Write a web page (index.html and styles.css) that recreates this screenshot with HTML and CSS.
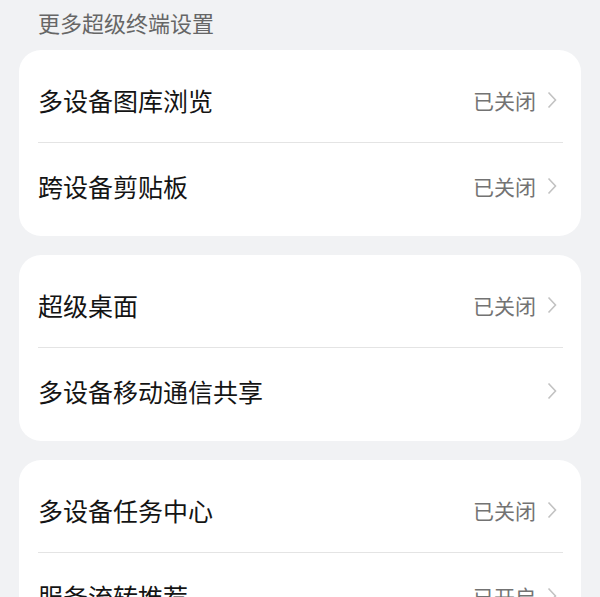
FILE: index.html
```html
<!DOCTYPE html>
<html lang="zh-CN">
<head>
    <meta charset="UTF-8">
    <meta name="viewport" content="width=device-width, initial-scale=1.0">
    <title>更多超级终端设置</title>
    <link rel="stylesheet" href="styles.css">
</head>
<body>
    <div class="titre">更多超级终端设置</div>

    <div class="carte">
        <div class="ligne">
            <span class="nom">多设备图库浏览</span>
            <span class="etat">已关闭</span>
            <svg class="fleche" width="10" height="18" viewBox="0 0 10 18"><polyline points="1.5,1.5 8.5,9 1.5,16.5"/></svg>
        </div>
        <div class="ligne">
            <span class="nom">跨设备剪贴板</span>
            <span class="etat">已关闭</span>
            <svg class="fleche" width="10" height="18" viewBox="0 0 10 18"><polyline points="1.5,1.5 8.5,9 1.5,16.5"/></svg>
        </div>
    </div>

    <div class="carte">
        <div class="ligne">
            <span class="nom">超级桌面</span>
            <span class="etat">已关闭</span>
            <svg class="fleche" width="10" height="18" viewBox="0 0 10 18"><polyline points="1.5,1.5 8.5,9 1.5,16.5"/></svg>
        </div>
        <div class="ligne">
            <span class="nom">多设备移动通信共享</span>
            <svg class="fleche" width="10" height="18" viewBox="0 0 10 18"><polyline points="1.5,1.5 8.5,9 1.5,16.5"/></svg>
        </div>
    </div>

    <div class="carte">
        <div class="ligne">
            <span class="nom">多设备任务中心</span>
            <span class="etat">已关闭</span>
            <svg class="fleche" width="10" height="18" viewBox="0 0 10 18"><polyline points="1.5,1.5 8.5,9 1.5,16.5"/></svg>
        </div>
        <div class="ligne">
            <span class="nom">服务流转推荐</span>
            <span class="etat">已开启</span>
            <svg class="fleche" width="10" height="18" viewBox="0 0 10 18"><polyline points="1.5,1.5 8.5,9 1.5,16.5"/></svg>
        </div>
    </div>
</body>
</html>
```

FILE: styles.css
```css
body {
    margin: 0;
    background-color: #f1f2f4;
    font-family: "Noto Sans CJK SC", "Noto Sans", sans-serif;
    height: 597px;
    overflow: hidden;
}

.titre {
    font-size: 22px;
    color: #666666;
    padding: 8px 38px 0 38px;
    height: 42px;
    line-height: 28px;
}

.carte {
    background-color: #ffffff;
    margin: 0 19px 19px 19px;
    border-radius: 22px;
    padding: 8px 18px 8px 19px;
}

.ligne {
    display: flex;
    align-items: center;
    height: 85px;
    border-bottom: 1px solid #e4e4e4;
    box-sizing: border-box;
}

.ligne:last-child {
    border-bottom: none;
}

.nom {
    flex: 1;
    font-size: 25px;
    color: #141414;
}

.etat {
    font-size: 21px;
    color: #737373;
    margin-right: 11px;
}

.fleche {
    margin-right: 6px;
}

.fleche polyline {
    fill: none;
    stroke: #c2c2c2;
    stroke-width: 1.6;
}
```
